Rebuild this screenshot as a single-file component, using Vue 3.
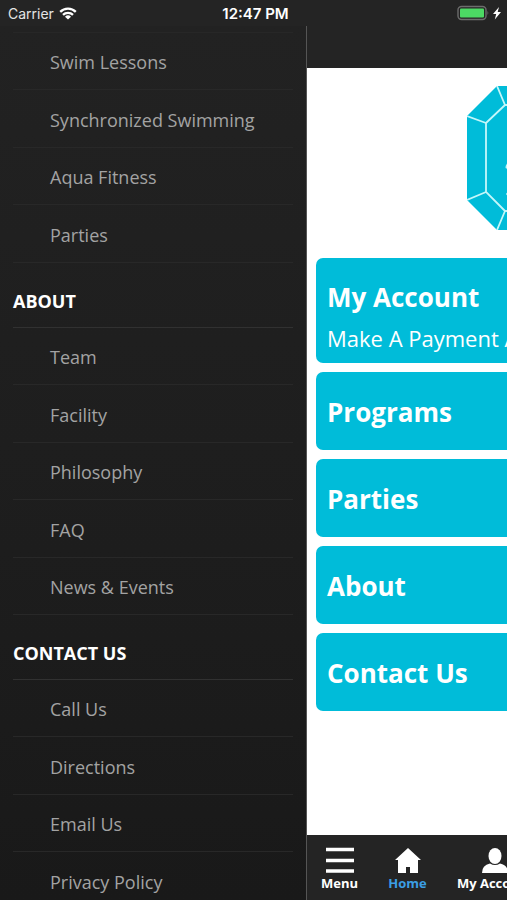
<script setup>
const firstLinks = ['Swim Lessons', 'Synchronized Swimming', 'Aqua Fitness', 'Parties']
const groups = [
  { title: 'About', links: ['Team', 'Facility', 'Philosophy', 'FAQ', 'News & Events'] },
  { title: 'Contact Us', links: ['Call Us', 'Directions', 'Email Us', 'Privacy Policy'] }
]
const cards = [
  { title: 'My Account', note: 'Make A Payment And More' },
  { title: 'Programs' },
  { title: 'Parties' },
  { title: 'About' },
  { title: 'Contact Us' }
]
</script>

<template>
  <div class="app">
    <header class="status">
      <div class="carrier">
        <span>Carrier</span>
        <svg width="18" height="13" viewBox="0 0 18 13" aria-hidden="true">
          <g fill="none" stroke="#fff" stroke-width="2.3">
            <path d="M1.2 4.9a11 11 0 0 1 15.6 0" />
            <path d="M4 7.9a7 7 0 0 1 10 0" />
          </g>
          <path d="M9 12.6 6 9.7a4.3 4.3 0 0 1 6 0z" fill="#fff" />
        </svg>
      </div>
      <time class="clock">12:47 PM</time>
      <div class="power">
        <svg width="46" height="16" viewBox="0 0 46 16" aria-hidden="true">
          <rect x="1" y="1.5" width="28" height="13" rx="3.5" fill="none" stroke="#6c6c6c" stroke-width="1.4" />
          <rect x="3" y="3.5" width="24" height="9" rx="1" fill="#4cd964" />
          <path d="M30.5 5.8q1.7 2.2 0 4.4z" fill="#6c6c6c" />
          <path d="M42 2 36 9h3.200l-1.400 5.500L44 7.100h-3.300z" fill="#fff" />
        </svg>
      </div>
    </header>

    <div class="stage">
      <nav class="menu" aria-label="Main menu">
        <ul class="links top-links">
          <li v-for="link in firstLinks" :key="link"><a href="#">{{ link }}</a></li>
        </ul>
        <section v-for="group in groups" :key="group.title">
          <h2>{{ group.title }}</h2>
          <ul class="links">
            <li v-for="link in group.links" :key="link"><a href="#">{{ link }}</a></li>
          </ul>
        </section>
      </nav>

      <div class="screen">
        <div class="bar"></div>
        <main class="content">
          <svg class="gem" width="186" height="144" viewBox="0 0 186 144" aria-hidden="true">
            <path d="M0 30 30 0h126l30 30v84l-30 30H30L0 114z" fill="#00bcd9" />
            <g fill="none" stroke="#c4f7fa" stroke-width="1.8">
              <path d="M19 37 38 19h110l19 18v69l-19 19H38l-19-19z" />
              <path d="M0 30l19 7M30 0l8 19M0 114l19-8M30 144l8-19M186 30l-19 7M156 0l-8 19M186 114l-19-8M156 144l-8-19" />
            </g>
            <path d="M38.5 82q0-5 6-8v3q-4 3-4 6z" fill="#c4f7fa" />
            <circle cx="40.5" cy="108" r="1.3" fill="#c4f7fa" />
          </svg>
          <div class="cards">
            <a v-for="card in cards" :key="card.title" class="card" :class="{ noted: card.note }" href="#">
              <strong>{{ card.title }}</strong>
              <span v-if="card.note">{{ card.note }}</span>
            </a>
          </div>
        </main>
        <nav class="tabs" aria-label="Sections">
          <button type="button" class="tab">
            <svg width="30" height="28" viewBox="0 0 30 28" aria-hidden="true">
              <path d="M1 2.500h28M1 13.500h28M1 24h28" stroke="#fff" stroke-width="3.4" />
            </svg>
            Menu
          </button>
          <button type="button" class="tab active">
            <svg width="30" height="28" viewBox="0 0 30 28" aria-hidden="true">
              <path d="M15 1 28 13h-3v13h-8v-6h-4v6H5V13H2z" fill="#fff" />
            </svg>
            Home
          </button>
          <button type="button" class="tab wide">
            <svg width="30" height="28" viewBox="0 0 30 28" aria-hidden="true">
              <ellipse cx="15" cy="9" rx="6.5" ry="8" fill="#fff" />
              <path d="M2 26q0-8 8-9.500 5 3 10 0 8 1.500 8 9.500z" fill="#fff" />
            </svg>
            My Account
          </button>
        </nav>
      </div>
    </div>
  </div>
</template>

<style>
body {
  margin: 0;
  background: #1a1a1a;
}
</style>

<style scoped>
.app {
  display: flex;
  flex-direction: column;
  height: 100vh;
  overflow: hidden;
  font-family: "Open Sans", "Noto Sans", sans-serif;
  color: #fff;
}
.status {
  display: grid;
  grid-template-columns: 1fr auto 1fr;
  align-items: center;
  flex: none;
  height: 26px;
  padding: 0 4px 0 8px;
  background: #242424;
  font-family: Inter, sans-serif;
  font-size: 15px;
}
.carrier {
  display: flex;
  align-items: center;
  gap: 5px;
  color: #e4e4e4;
  font-size: 14px;
}
.clock {
  font-weight: 600;
}
.power {
  display: flex;
  justify-content: flex-end;
}
.stage {
  display: flex;
  flex: 1;
  min-height: 0;
  overflow: hidden;
}
.menu {
  box-sizing: border-box;
  flex: 0 0 306px;
  padding: 6px 13px 0;
  overflow: hidden;
  background: linear-gradient(#222, #1d1d1d 60%, #191919);
}
.links {
  margin: 0;
  padding: 0;
  list-style: none;
}
.links li {
  display: flex;
  box-sizing: border-box;
  height: 57px;
  border-bottom: 1px solid #282828;
}
.links li:nth-child(even) {
  height: 58px;
}
.top-links {
  border-top: 1px solid #272727;
}
.links a {
  display: flex;
  flex: 1;
  align-items: center;
  padding: 2px 0 0 37px;
  color: #a3a3a3;
  font-size: 18px;
  text-decoration: none;
}
h2 {
  box-sizing: border-box;
  height: 65px;
  margin: 0;
  padding-top: 26px;
  border-bottom: 1px solid #313131;
  font-size: 18px;
  font-weight: 700;
  line-height: 24px;
  text-transform: uppercase;
}
.screen {
  display: flex;
  flex: 0 0 100%;
  flex-direction: column;
  box-sizing: border-box;
  border-left: 1px solid #555;
  background: #fff;
}
.bar {
  flex: none;
  height: 42px;
  background: #242424;
}
.content {
  flex: 1;
  padding: 18px 9px 0;
}
.gem {
  display: block;
  margin: 0 auto 28px;
}
.cards {
  display: grid;
  gap: 9px;
}
.card {
  display: flex;
  flex-direction: column;
  justify-content: center;
  gap: 4px;
  box-sizing: border-box;
  min-height: 78px;
  padding: 14px 11px 12px;
  border-radius: 7px;
  background: #00bcd9;
  color: #fff;
  text-decoration: none;
}
.card.noted {
  padding: 19px 11px 8px;
}
.card strong {
  font-size: 26px;
  line-height: 40px;
}
.card span {
  font-size: 22px;
  line-height: 34px;
}
.tabs {
  display: flex;
  flex: none;
  gap: 3px;
  height: 65px;
  background: #242424;
}
.tab {
  display: flex;
  flex-direction: column;
  align-items: center;
  width: 65px;
  padding: 12px 0 0;
  border: 0;
  background: none;
  color: #fff;
  font: 700 13px/16px "Open Sans", "Noto Sans", sans-serif;
  white-space: nowrap;
}
.tab.active {
  color: #3b9ee5;
}
.tab.wide {
  width: 104px;
}
</style>
